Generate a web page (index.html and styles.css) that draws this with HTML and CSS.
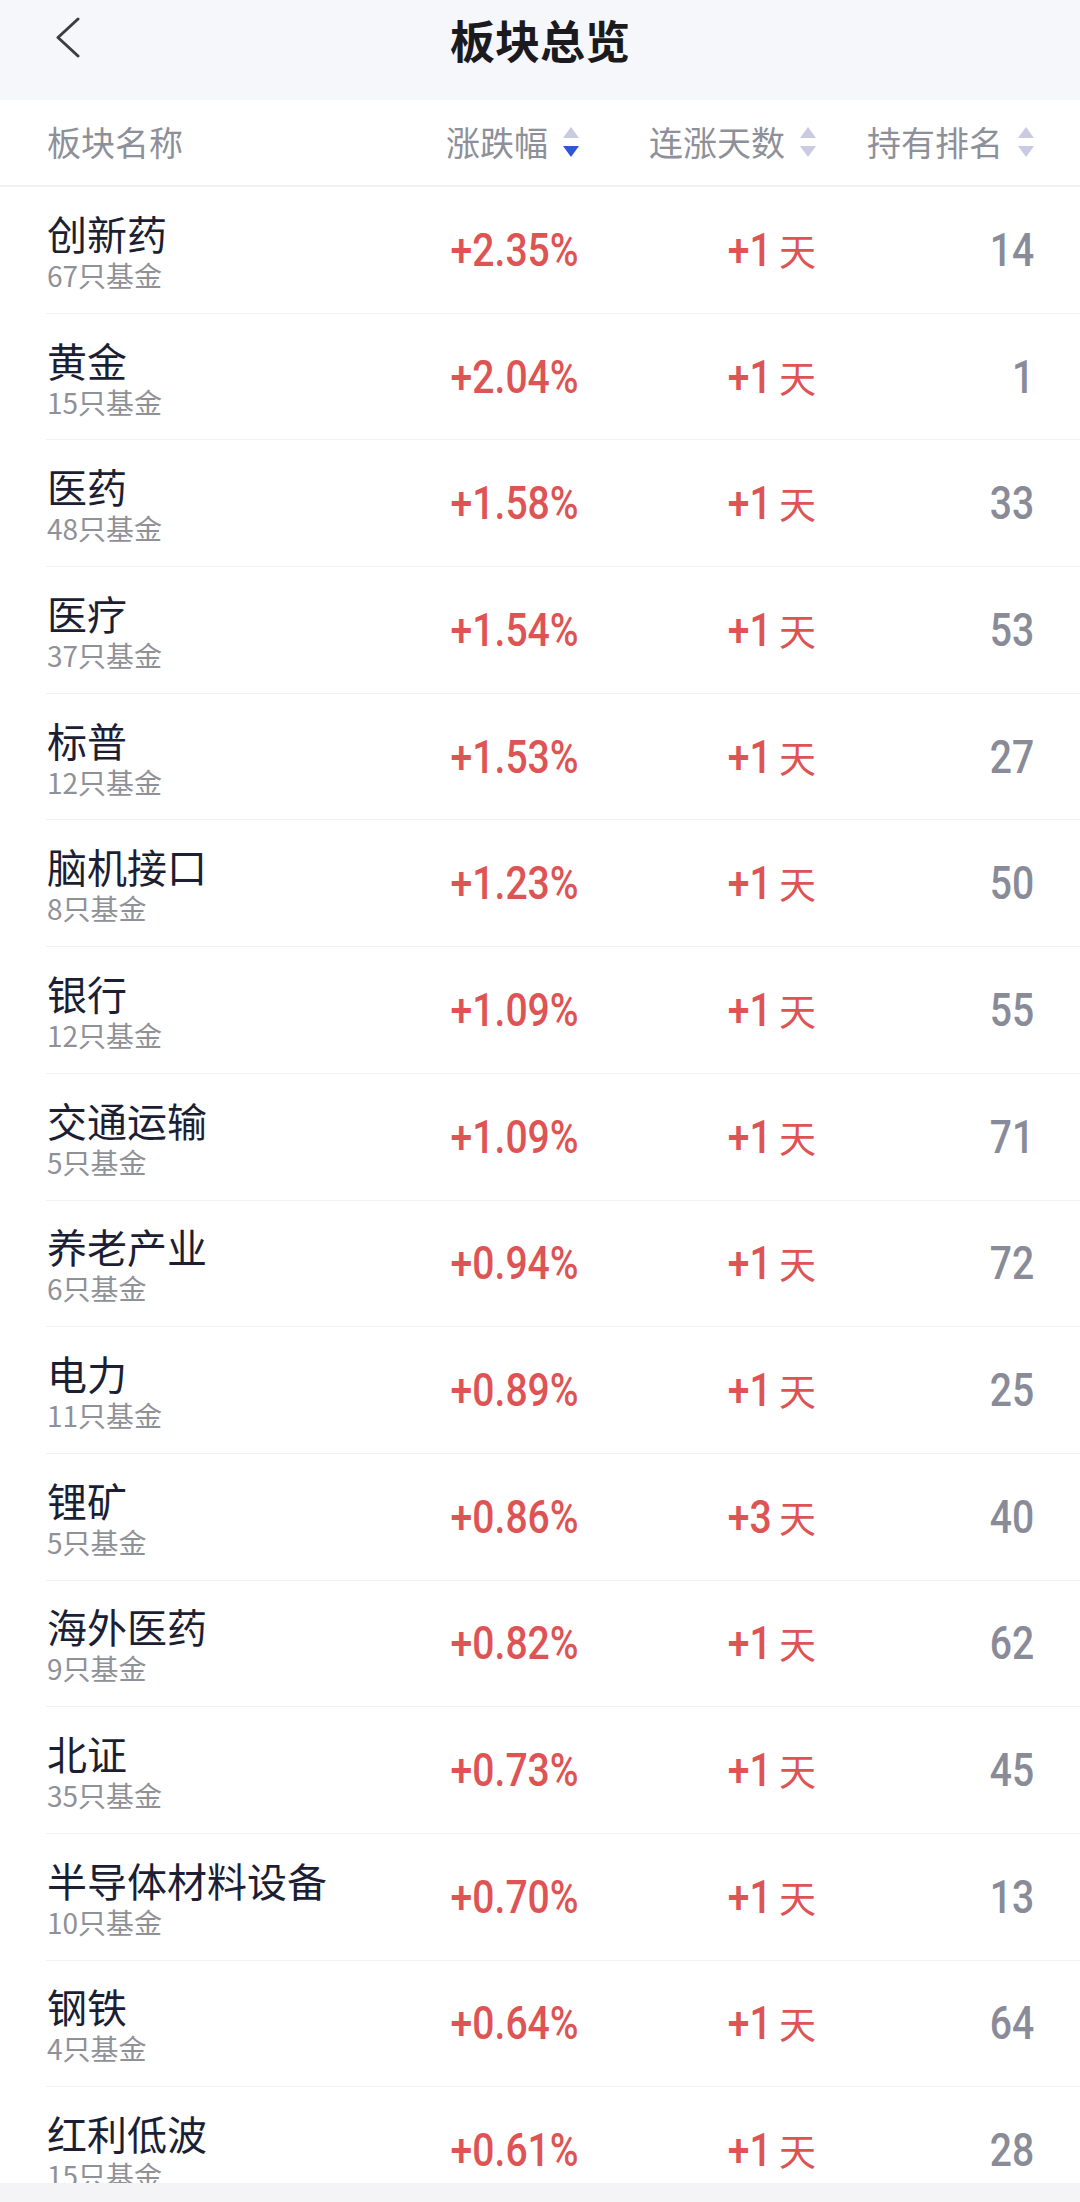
FILE: index.html
```html
<!DOCTYPE html>
<html lang="zh-CN">
<head>
    <meta charset="UTF-8">
    <meta name="viewport" content="width=device-width, initial-scale=1.0">
    <title>板块总览</title>
    <link rel="stylesheet" href="styles.css">
</head>
<body>
    <div class="page">
        <!-- Top bar -->
        <header class="topbar">
            <a class="back" href="#">
                <svg width="40" height="60" viewBox="0 0 40 60">
                    <polyline points="22,19 2,37.5 22,56" fill="none" stroke="#3b3d44" stroke-width="3" stroke-linecap="round" stroke-linejoin="round"/>
                </svg>
            </a>
            <h1 class="title">板块总览</h1>
        </header>

        <!-- Column headers -->
        <div class="thead">
            <div class="th th-name">板块名称</div>
            <div class="th">涨跌幅<span class="sort active-down"><i class="up"></i><i class="down"></i></span></div>
            <div class="th">连涨天数<span class="sort"><i class="up"></i><i class="down"></i></span></div>
            <div class="th">持有排名<span class="sort"><i class="up"></i><i class="down"></i></span></div>
        </div>

        <!-- List -->
        <div class="list" id="list"></div>

        <div class="bottom-bar"></div>
    </div>

    <script>
        const sectors = [
            ['创新药', 67, '+2.35%', 1, 14],
            ['黄金', 15, '+2.04%', 1, 1],
            ['医药', 48, '+1.58%', 1, 33],
            ['医疗', 37, '+1.54%', 1, 53],
            ['标普', 12, '+1.53%', 1, 27],
            ['脑机接口', 8, '+1.23%', 1, 50],
            ['银行', 12, '+1.09%', 1, 55],
            ['交通运输', 5, '+1.09%', 1, 71],
            ['养老产业', 6, '+0.94%', 1, 72],
            ['电力', 11, '+0.89%', 1, 25],
            ['锂矿', 5, '+0.86%', 3, 40],
            ['海外医药', 9, '+0.82%', 1, 62],
            ['北证', 35, '+0.73%', 1, 45],
            ['半导体材料设备', 10, '+0.70%', 1, 13],
            ['钢铁', 4, '+0.64%', 1, 64],
            ['红利低波', 15, '+0.61%', 1, 28]
        ];

        const list = document.getElementById('list');
        list.innerHTML = sectors.map(([name, funds, change, days, rank]) => `
            <div class="row">
                <div class="cell-name">
                    <div class="name">${name}</div>
                    <div class="funds">${funds}只基金</div>
                </div>
                <div class="num up-color"><span class="digits">${change}</span></div>
                <div class="num up-color"><span class="digits">+${days}</span><span class="unit">天</span></div>
                <div class="num rank"><span class="digits">${rank}</span></div>
            </div>
        `).join('');
    </script>
</body>
</html>
```

FILE: styles.css
```css
/* Base */
html, body {
    margin: 0;
    padding: 0;
    background: #ffffff;
    font-family: "Noto Sans CJK SC", "Noto Sans", sans-serif;
    overflow: hidden;
}

.page {
    height: 2202px;
    display: flex;
    flex-direction: column;
}

/* Top bar */
.topbar {
    height: 100px;
    flex: none;
    background: #f6f7fa;
    display: flex;
    justify-content: center;
    position: relative;
}

.back {
    position: absolute;
    left: 56px;
    top: 0;
    display: block;
}

.title {
    margin: 0;
    font-size: 45px;
    font-weight: 700;
    line-height: 80px;
    color: #1b1b1f;
}

/* Table layout */
.thead,
.row {
    display: grid;
    grid-template-columns: 1fr 180px 237px 218px;
    align-items: center;
}

.thead {
    height: 85px;
    flex: none;
    padding: 0 46px 0 47px;
    border-bottom: 2px solid #f0f1f3;
}

.th {
    display: flex;
    align-items: center;
    justify-content: flex-end;
    font-size: 34px;
    color: #8e9099;
    line-height: 40px;
    padding-bottom: 1px;
}

.th-name {
    justify-content: flex-start;
}

/* Sort arrows */
.sort {
    display: flex;
    flex-direction: column;
    gap: 8px;
    margin-left: 15px;
}

.sort i {
    display: block;
    width: 0;
    height: 0;
    border-left: 8.5px solid transparent;
    border-right: 8.5px solid transparent;
}

.sort .up {
    border-bottom: 11px solid #c9cbe2;
}

.sort .down {
    border-top: 11px solid #c9cbe2;
}

.sort.active-down .down {
    border-top-color: #2f56d6;
}

/* List */
.list {
    flex: 1;
    overflow: hidden;
}

.row {
    height: 126.7px;
    box-sizing: border-box;
    margin-left: 46px;
    padding: 0 46px 0 1px;
    border-bottom: 1.5px solid #f2f2f4;
}

.cell-name {
    padding-top: 2px;
}

.name {
    font-size: 40px;
    line-height: 48px;
    color: #1c1f34;
}

.funds {
    font-size: 28px;
    line-height: 36px;
    color: #8f9198;
}

.num {
    display: flex;
    justify-content: flex-end;
    align-items: baseline;
    font-size: 46px;
    line-height: 54px;
}

/* narrow DIN-like digits */
.digits {
    display: inline-block;
    font-family: Roboto, "Noto Sans", sans-serif;
    font-weight: 500;
    transform: scaleX(0.85);
    transform-origin: right center;
}

.up-color {
    color: #de5353;
}

.unit {
    font-size: 37px;
    margin-left: 7px;
}

.rank {
    color: #898b98;
}

.bottom-bar {
    height: 19px;
    flex: none;
    background: #f4f4f6;
}
```
